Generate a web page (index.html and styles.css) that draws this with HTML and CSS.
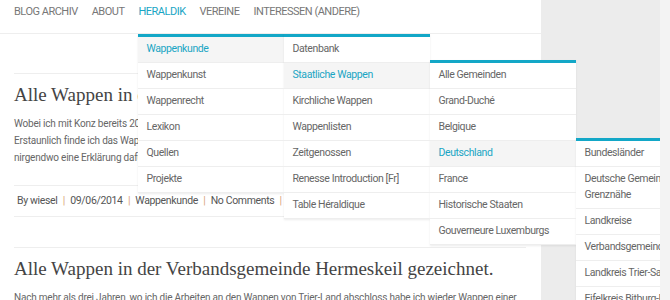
FILE: index.html
```html
<!DOCTYPE html>
<html lang="de">
<head>
  <meta charset="UTF-8">
  <meta name="viewport" content="width=device-width, initial-scale=1.0">
  <title>Heraldik</title>
  <link rel="stylesheet" href="styles.css">
</head>
<body>
  <div class="site">
    <div class="main">
      <!-- Hauptmenü -->
      <nav class="topnav">
        <ul class="menu">
          <li><a href="#">Blog Archiv</a></li>
          <li><a href="#">About</a></li>
          <li class="current"><a href="#">Heraldik</a>
            <ul class="sub">
              <li class="current"><a href="#">Wappenkunde</a>
                <ul class="sub">
                  <li><a href="#">Datenbank</a></li>
                  <li class="current"><a href="#">Staatliche Wappen</a>
                    <ul class="sub">
                      <li><a href="#">Alle Gemeinden</a></li>
                      <li><a href="#">Grand-Duché</a></li>
                      <li><a href="#">Belgique</a></li>
                      <li class="current"><a href="#">Deutschland</a>
                        <ul class="sub">
                          <li><a href="#">Bundesländer</a></li>
                          <li><a href="#">Deutsche Gemeinden in Grenznähe</a></li>
                          <li><a href="#">Landkreise</a></li>
                          <li><a href="#">Verbandsgemeinden</a></li>
                          <li><a href="#">Landkreis Trier-Saarburg</a></li>
                          <li><a href="#">Eifelkreis Bitburg-Prüm</a></li>
                        </ul>
                      </li>
                      <li><a href="#">France</a></li>
                      <li><a href="#">Historische Staaten</a></li>
                      <li><a href="#">Gouverneure Luxemburgs</a></li>
                    </ul>
                  </li>
                  <li><a href="#">Kirchliche Wappen</a></li>
                  <li><a href="#">Wappenlisten</a></li>
                  <li><a href="#">Zeitgenossen</a></li>
                  <li><a href="#">Renesse Introduction [Fr]</a></li>
                  <li><a href="#">Table Héraldique</a></li>
                </ul>
              </li>
              <li><a href="#">Wappenkunst</a></li>
              <li><a href="#">Wappenrecht</a></li>
              <li><a href="#">Lexikon</a></li>
              <li><a href="#">Quellen</a></li>
              <li><a href="#">Projekte</a></li>
            </ul>
          </li>
          <li><a href="#">Vereine</a></li>
          <li><a href="#">Interessen (andere)</a></li>
        </ul>
      </nav>

      <div class="content">
        <article class="post">
          <h2>Alle Wappen in der Verbandsgemeinde Konz gezeichnet.</h2>
          <p>Wobei ich mit Konz bereits 2012 angefangen hatte, sind jetzt alle Wappen der Verbandsgemeinde fertig.<br>
            Erstaunlich finde ich das Wappen von Wiltingen, das so gar nicht zu den anderen Ortswappen passt und für das ich<br>
            nirgendwo eine Erklärung dafür finden konnte.</p>
          <div class="meta">
            By wiesel <span class="sep">|</span> 09/06/2014 <span class="sep">|</span> Wappenkunde <span class="sep">|</span> No Comments <span class="sep">|</span>
          </div>
        </article>

        <article class="post">
          <h2>Alle Wappen in der Verbandsgemeinde Hermeskeil gezeichnet.</h2>
          <p>Nach mehr als drei Jahren, wo ich die Arbeiten an den Wappen von Trier-Land abschloss habe ich wieder Wappen einer
            ganzen Verbandsgemeinde gezeichnet.</p>
        </article>
      </div>
    </div>
    <aside class="sidebar"></aside>
  </div>
</body>
</html>
```

FILE: styles.css
```css
body {
  margin: 0;
  background: #f3f3f3;
  font-family: Roboto, "Liberation Sans", sans-serif;
  color: #666;
}

.site {
  display: flex;
  width: 660px;
  min-height: 100vh;
  overflow: hidden;
}

.main {
  width: 541px;
  background: #fff;
}

.sidebar {
  flex: 1;
  background: #ececec;
}

/* Menü */
.topnav {
  height: 33px;
  border-bottom: 1px solid #eee;
}

.menu, .sub {
  list-style: none;
  margin: 0;
  padding: 0;
}

.menu {
  display: flex;
  gap: 14px;
  padding-left: 14px;
}

.menu > li {
  position: relative;
}

.menu > li > a {
  display: block;
  padding: 4px 0 13px;
  line-height: 16px;
  font-size: 11px;
  letter-spacing: -0.5px;
  text-transform: uppercase;
  color: #777;
  text-decoration: none;
}

.menu > li.current > a {
  color: #1aa5c4;
}

.sub {
  position: absolute;
  width: 146px;
  background: #fff;
  border-top: 3px solid #13a7c7;
  box-shadow: 0 1px 2px rgba(0, 0, 0, 0.08);
}

.menu > li > .sub {
  top: 34px;
  left: 0;
}

.sub .sub {
  top: -3px;
  left: 100%;
}

.sub li {
  position: relative;
  border-bottom: 1px solid #eee;
}

.sub a {
  display: block;
  padding: 4px 8px 5px;
  line-height: 16px;
  font-size: 10.5px;
  letter-spacing: -0.4px;
  color: #666;
  text-decoration: none;
}

.sub li.current > a {
  background: #f5f5f5;
  color: #1aa5c4;
}

/* Beiträge */
.content {
  padding: 39px 15px 0 14px;
}

.post {
  border-top: 1px solid #eee;
  padding-top: 9px;
  margin-bottom: 30px;
}

.post h2 {
  margin: 0 0 8px;
  font: 400 19px/24px "Liberation Serif", serif;
  color: #444;
}

.post p {
  margin: 0 0 19px;
  font-size: 10px;
  letter-spacing: -0.2px;
  line-height: 17px;
}

.meta {
  padding: 7px 3px;
  border-top: 1px solid #eee;
  border-bottom: 1px solid #eee;
  font-size: 10.5px;
  letter-spacing: -0.35px;
  line-height: 16px;
  color: #555;
}

.meta .sep {
  margin: 0 3px;
  color: #d9a27a;
}
```
